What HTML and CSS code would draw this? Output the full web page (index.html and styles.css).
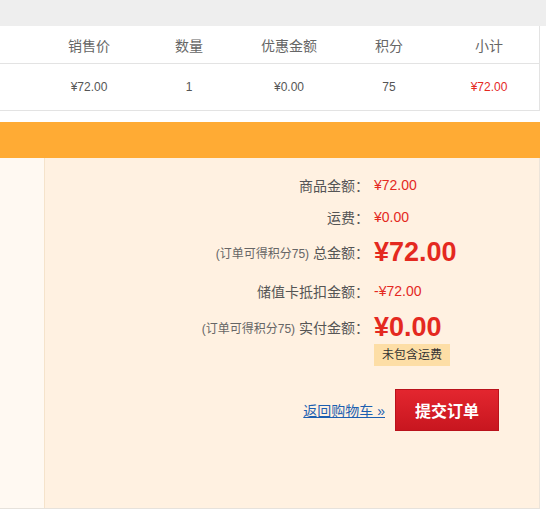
FILE: index.html
```html
<!DOCTYPE html>
<html lang="zh-CN">
<head>
<meta charset="utf-8">
<title>订单结算</title>
<link rel="stylesheet" href="styles.css">
</head>
<body>
<div class="topbar"></div>
<div class="main">
  <div class="goods-table">
    <div class="tr th">
      <div class="cell"></div>
      <div class="cell">销售价</div>
      <div class="cell">数量</div>
      <div class="cell">优惠金额</div>
      <div class="cell">积分</div>
      <div class="cell">小计</div>
    </div>
    <div class="tr td">
      <div class="cell"></div>
      <div class="cell">¥72.00</div>
      <div class="cell">1</div>
      <div class="cell">¥0.00</div>
      <div class="cell">75</div>
      <div class="cell red">¥72.00</div>
    </div>
  </div>

  <div class="orange-bar"></div>

  <div class="panel">
    <div class="panel-side"></div>
    <div class="panel-body">
      <div class="row">
        <div class="label">商品金额：</div>
        <div class="value">¥72.00</div>
      </div>
      <div class="row">
        <div class="label">运费：</div>
        <div class="value">¥0.00</div>
      </div>
      <div class="row row-big">
        <div class="label"><span class="note">(订单可得积分75)</span> 总金额：</div>
        <div class="value big">¥72.00</div>
      </div>
      <div class="row row-mid">
        <div class="label">储值卡抵扣金额：</div>
        <div class="value">-¥72.00</div>
      </div>
      <div class="row">
        <div class="label"><span class="note">(订单可得积分75)</span> 实付金额：</div>
        <div class="value big">¥0.00</div>
      </div>
      <div class="row row-badge">
        <div class="label"></div>
        <div class="value"><span class="badge">未包含运费</span></div>
      </div>
      <div class="actions">
        <a class="back-link" href="#">返回购物车 »</a>
        <button class="submit" type="button">提交订单</button>
      </div>
    </div>
  </div>
</div>
</body>
</html>
```

FILE: styles.css
```css
* {
  box-sizing: border-box;
}

html, body {
  margin: 0;
  padding: 0;
  background: #ffffff;
}

body {
  font-family: "Liberation Sans", "Noto Sans CJK SC", sans-serif;
  color: #555555;
  width: 546px;
  height: 511px;
  overflow: hidden;
}

.topbar {
  height: 26px;
  background: #eeeeee;
}

.main {
  width: 540px;
}

.goods-table {
  border-right: 1px solid #e3e3e3;
}

.tr {
  display: grid;
  grid-template-columns: 39px repeat(5, 100px);
  border-bottom: 1px solid #e3e3e3;
  align-items: center;
}

.th {
  height: 38px;
  font-size: 14px;
  color: #666666;
}

.td {
  height: 47px;
  font-size: 12px;
  color: #555555;
}

.cell {
  text-align: center;
}

.red {
  color: #e4291f;
}

.orange-bar {
  margin-top: 11px;
  height: 36px;
  background: #ffab34;
}

.panel {
  display: flex;
  height: 351px;
  border-right: 1px solid #ece4da;
  border-bottom: 1px solid #e6e2dc;
}

.panel-side {
  width: 45px;
  background: #fff9f2;
  border-right: 1px solid #f5e3cb;
}

.panel-body {
  flex: 1;
  background: #fff1e1;
  padding-top: 11px;
}

.row {
  display: flex;
  align-items: center;
  height: 32px;
}

.row-big {
  height: 38px;
}

.row-mid {
  height: 40px;
}

.row-badge {
  height: 22px;
  margin-top: 1px;
}

.label {
  width: 324px;
  text-align: right;
  font-size: 14px;
  color: #555555;
  white-space: nowrap;
}

.note {
  font-size: 12px;
  color: #666666;
}

.value {
  margin-left: 5px;
  font-size: 14px;
  color: #e4291f;
  white-space: nowrap;
}

.value.big {
  font-size: 27px;
  font-weight: bold;
  line-height: 32px;
}

.badge {
  display: inline-block;
  height: 22px;
  line-height: 22px;
  padding: 0 8px;
  background: #fddea6;
  color: #333333;
  font-size: 12px;
}

.actions {
  display: flex;
  justify-content: flex-end;
  align-items: center;
  gap: 10px;
  margin-top: 23px;
  padding-right: 40px;
}

.back-link {
  font-size: 14px;
  color: #1d5fb0;
  text-decoration: underline;
}

.submit {
  width: 104px;
  height: 42px;
  border: 1px solid #b9121b;
  background: linear-gradient(#e3262f, #c8161f);
  color: #ffffff;
  font-family: "Liberation Sans", "Noto Sans CJK SC", sans-serif;
  font-size: 16px;
  font-weight: bold;
  padding: 0;
  cursor: pointer;
}
```
